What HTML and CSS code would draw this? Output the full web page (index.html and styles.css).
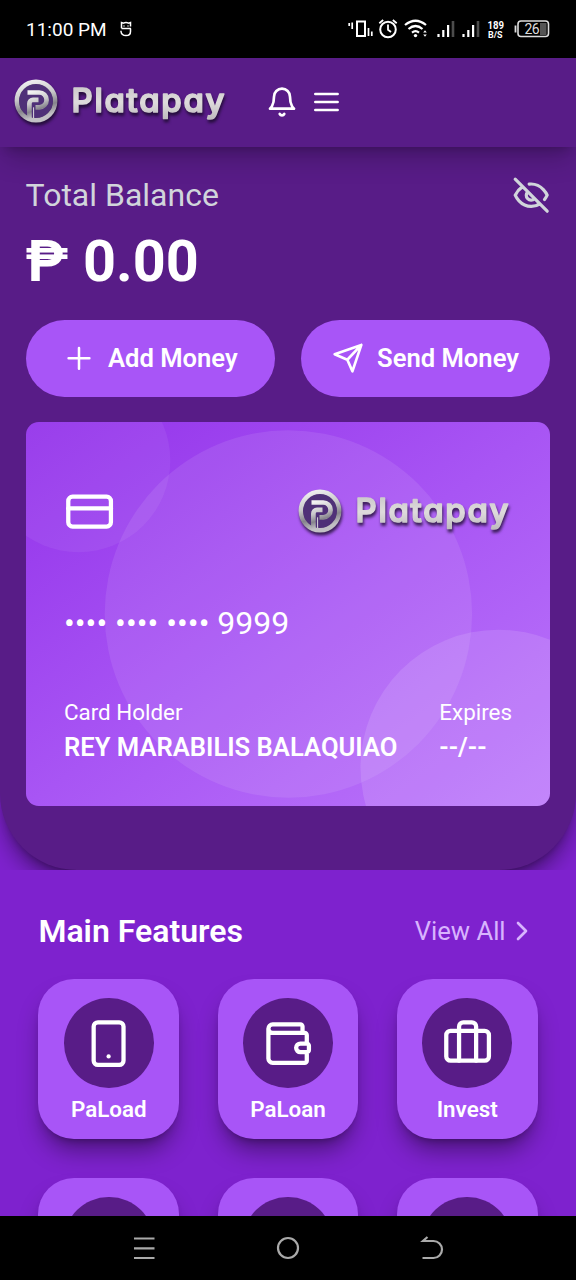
FILE: index.html
```html
<!DOCTYPE html>
<html lang="en">
<head>
<meta charset="utf-8">
<title>Platapay</title>
<link rel="stylesheet" href="styles.css">
</head>
<body>
<svg class="defs" width="0" height="0" aria-hidden="true">
  <defs>
    <linearGradient id="silver" x1="0" y1="0" x2="0.25" y2="1">
      <stop offset="0" stop-color="#f4f4f4"/><stop offset=".45" stop-color="#c9c9cb"/><stop offset=".75" stop-color="#86848c"/><stop offset="1" stop-color="#c2c0c5"/>
    </linearGradient>
    <linearGradient id="lettering" x1="0" y1="0" x2="0" y2="1">
      <stop offset="0" stop-color="#c4c2c4"/><stop offset=".55" stop-color="#dedbdc"/><stop offset="1" stop-color="#bdb9bd"/>
    </linearGradient>
    <symbol id="logo" viewBox="0 0 214 52">
      <circle cx="23" cy="25" r="17" fill="#4f3078"/>
      <circle cx="23" cy="25" r="19.2" fill="none" stroke="url(#silver)" stroke-width="4.4"/>
      <path d="M14.500 16.500H26.200a7.400 7.400 0 0 1 0 14.800H22.500M16.400 42V27.500a3.600 3.600 0 0 1 3.600-3.600H25.500" fill="none" stroke="url(#silver)" stroke-width="4.700"/>
      <path d="M20.600 42V31.300" fill="none" stroke="#dcdadd" stroke-width="1"/>
      <text class="logo-text" x="58.500" y="36" textLength="153" lengthAdjust="spacing">Platapay</text>
    </symbol>
  </defs>
</svg>
<div class="screen">
  <div class="status">
    <span class="clock">11:00 PM</span>
    <svg class="app-mark" width="12" height="16" viewBox="0 0 12 16"><path d="M1.500 7.200V1.500L3.500 2.200Q6 .8 8.500 2.200L10.500 1.500V5.500M4 4.400V5.400M8 4.400V5.400M1.500 7.600H11M1 9.800V10.500Q1.500 14.600 6 14.600Q10.500 14.600 10.500 10.500V7.600" fill="none" stroke="#fff" stroke-width="1.500"/></svg>
    <svg class="system" width="206" height="28" viewBox="0 0 206 28" fill="none" stroke="#fff">
      <path d="M2.200 7V10M5.200 6.500V13M21.500 12V20M24.800 15.500V20" stroke-width="1.700"/>
      <rect x="10" y="5.500" width="8" height="14.500" stroke-width="2"/>
      <circle cx="41" cy="13.500" r="7.800" stroke-width="2"/>
      <path d="M41 8.500V13.700L44 16M32.300 7.200L36.200 4M45.800 4L49.700 7.200" stroke-width="1.800"/>
      <path d="M58 9Q68.500 .5 79 9M61.500 13Q68.500 7 75.500 13M65 16.600Q68.500 13.800 72 16.600" stroke-width="2.200"/>
      <circle cx="68.500" cy="19.600" r="1.700" fill="#fff" stroke="none"/>
      <path d="M76.200 16.500L78 14.300L79.800 16.500ZM76.200 18.500L78 20.700L79.800 18.500Z" fill="#fff" stroke="none"/>
      <path d="M91.500 18V21M96.300 14V21M101.100 9V21M116.500 18V21M121.300 14V21M126.100 9V21" stroke-width="2.200"/>
      <path d="M106 5V21M131 5V21" stroke="#4c4c4c" stroke-width="2.600"/>
      <text class="rate" x="140.500" y="12.600" textLength="16.500" lengthAdjust="spacingAndGlyphs">189</text>
      <text class="rate small" x="141" y="22" textLength="14.500" lengthAdjust="spacingAndGlyphs">B/S</text>
      <rect x="193" y="7" width="6.500" height="12" fill="#555" stroke="none"/>
      <rect x="171" y="5" width="30.500" height="15.500" rx="3" stroke-width="1.600" stroke="#ddd"/>
      <path d="M168.500 9.500V16.500" stroke="#ddd" stroke-width="1.800"/>
      <text class="charge" x="177.500" y="17.800" textLength="15">26</text>
    </svg>
  </div>

  <header class="topbar">
    <svg class="logo" role="img" aria-label="Platapay"><use href="#logo"/></svg>
    <svg class="icon" viewBox="0 0 24 24" stroke-width="2"><path d="M6 8a6 6 0 0 1 12 0c0 7 3 9 3 9H3s3-2 3-9M10.300 21a1.940 1.940 0 0 0 3.400 0"/></svg>
    <svg class="icon" viewBox="0 0 24 24" stroke-width="2"><path d="M4 6H20.700M4 12H20.700M4 18H20.700"/></svg>
  </header>

  <main class="content">
    <div class="hero-wrap">
      <section class="hero">
        <div class="balance-head">
          <span>Total Balance</span>
          <svg class="icon eye" viewBox="0 0 24 24" stroke-width="2"><path d="M9.880 9.880a3 3 0 1 0 4.240 4.240M10.730 5.080A10.430 10.430 0 0 1 12 5c7 0 10 7 10 7a13.160 13.160 0 0 1-1.670 2.680M6.610 6.610A13.526 13.526 0 0 0 2 12s3 7 10 7a9.740 9.740 0 0 0 5.390-1.610M2 2L22 22"/></svg>
        </div>
        <div class="amount">₱ 0.00</div>
        <div class="actions">
          <button class="action"><svg class="icon" viewBox="0 0 24 24" stroke-width="1.900"><path d="M12 4.500V20M4.200 12.200H19.800"/></svg>Add Money</button>
          <button class="action"><svg class="icon" viewBox="0 0 24 24" stroke-width="2"><path d="M22 2.200L15.300 22L11.500 13.300L2 9.200ZM22 2.200L11.500 13.300"/></svg>Send Money</button>
        </div>
        <section class="card">
          <svg class="card-art" viewBox="0 0 524.8 384" fill="#fff"><circle cx="52.500" cy="38.500" r="91.800" opacity=".06"/><circle cx="262.400" cy="192" r="183.700" opacity=".09"/><circle cx="472.300" cy="345.500" r="137.800" opacity=".12"/></svg>
          <div class="card-top">
            <svg class="icon large" viewBox="0 0 24 24" stroke-width="2"><rect x="2" y="5" width="20" height="14" rx="2"/><path d="M2 10.500H22"/></svg>
            <svg class="logo" role="img" aria-label="Platapay"><use href="#logo"/></svg>
          </div>
          <div class="card-number">•••• •••• •••• 9999</div>
          <div class="card-info">
            <div><div class="label">Card Holder</div><div class="value">REY MARABILIS BALAQUIAO</div></div>
            <div><div class="label">Expires</div><div class="value">--/--</div></div>
          </div>
        </section>
      </section>
    </div>

    <section class="features">
      <div class="features-head">
        <h2>Main Features</h2>
        <a class="view-all">View All<svg class="icon" viewBox="0 0 24 24" stroke-width="2"><path d="M9 18l6-6-6-6"/></svg></a>
      </div>
      <div class="grid">
        <div class="tile"><div class="disc"><svg class="icon large" viewBox="0 0 24 24" stroke-width="2"><rect x="5" y="2" width="14" height="20" rx="2"/><path d="M12 18h.01"/></svg></div>PaLoad</div>
        <div class="tile"><div class="disc"><svg class="icon large" viewBox="0 0 24 24" stroke-width="2"><path d="M19 7V4a1 1 0 0 0-1-1H5a2 2 0 0 0 0 4h15a1 1 0 0 1 1 1v4M3 5v14a2 2 0 0 0 2 2h15a1 1 0 0 0 1-1v-4M18 12a2 2 0 0 0 0 4h3a1 1 0 0 0 1-1v-2a1 1 0 0 0-1-1Z"/></svg></div>PaLoan</div>
        <div class="tile"><div class="disc"><svg class="icon large" viewBox="0 0 24 24" stroke-width="2"><path d="M16 20V4a2 2 0 0 0-2-2h-4a2 2 0 0 0-2 2v16"/><rect x="2" y="6" width="20" height="14" rx="2"/></svg></div>Invest</div>
        <div class="tile"><div class="disc"></div></div>
        <div class="tile"><div class="disc"></div></div>
        <div class="tile"><div class="disc"></div></div>
      </div>
    </section>
  </main>

  <nav class="sysnav">
    <svg width="24" height="24" viewBox="0 0 24 24"><path d="M2 2.500H22.500M2 12.300H22.500M2 22H22.500"/></svg>
    <svg width="24" height="24" viewBox="0 0 24 24"><circle cx="12" cy="12" r="10"/></svg>
    <svg width="24" height="24" viewBox="0 0 24 24"><path d="M7.500 1L3 5H13.500a8.500 8.500 0 0 1 0 17H2.500"/></svg>
  </nav>
</div>
</body>
</html>
```
FILE: styles.css
```css
* { box-sizing: border-box; }
body { margin: 0; background: #000; font-family: Roboto, "Liberation Sans", sans-serif; color: #fff; }
.defs { position: absolute; }
.screen { width: 576px; height: 1280px; display: flex; flex-direction: column; overflow: hidden; }

.status { height: 57.6px; flex: none; display: flex; align-items: center; padding: 2px 23px 0 26px; background: #000; }
.clock { font-size: 19px; }
.app-mark { margin: -2px 0 0 13px; }
.system { margin-left: auto; }
.rate { font: 700 10.5px Roboto, sans-serif; fill: #fff; stroke: none; }
.rate.small { font-size: 9px; }
.charge { font: 400 14px Roboto, sans-serif; fill: #ddd; stroke: none; }

.icon { width: 32px; height: 32px; flex: none; fill: none; stroke: currentColor; stroke-linecap: round; stroke-linejoin: round; }
.icon.large { width: 51.2px; height: 51.2px; display: block; }
.logo { width: 214px; height: 52px; display: block; filter: drop-shadow(1px 3px 1.5px rgba(20, 8, 35, .75)); }
.logo-text { font: 500 33px Inter, Lato, sans-serif; font-feature-settings: "cv11"; fill: url(#lettering); stroke: url(#lettering); stroke-width: 1.7px; stroke-linejoin: round; }

.topbar { height: 89.6px; flex: none; display: flex; align-items: center; padding-left: 13px; background: #581c87; position: relative; z-index: 2; box-shadow: 0 16px 24px -5px rgba(0, 0, 0, .22), 0 6px 10px -6px rgba(0, 0, 0, .25); }
.topbar .icon { margin-left: 12.8px; }
.topbar .logo + .icon { margin-left: 38.6px; }

.content { flex: 1; min-height: 0; overflow: hidden; background: #7e22ce; }
.hero-wrap { overflow: hidden; }
.hero { height: 723.2px; padding: 25.6px 25.6px 64px; background: #581c87; border-radius: 0 0 76.8px 76.8px; box-shadow: 0 16px 24px -5px rgba(0, 0, 0, .45), 0 6px 10px -6px rgba(0, 0, 0, .4); }
.balance-head { display: flex; align-items: center; justify-content: space-between; height: 44.8px; font-size: 32px; color: #d1d5db; }
.eye { width: 38.4px; height: 38.4px; }
.amount { margin: 12.8px 0 25.6px; height: 64px; line-height: 64px; font-size: 57.6px; font-weight: 700; white-space: pre; }
.actions { display: grid; grid-template-columns: 1fr 1fr; gap: 25.6px; }
.action { height: 76.8px; display: flex; align-items: center; justify-content: center; gap: 12.8px; padding: 0; border: 0; border-radius: 39px; background: #a855f7; color: #fff; font: 600 25.6px Roboto, sans-serif; }

.card { position: relative; overflow: hidden; height: 384px; margin-top: 25.6px; padding: 38.4px; border-radius: 12.8px; background: linear-gradient(to bottom right, #9333ea, #a855f4 50%, #bb76fb); }
.card-art { position: absolute; inset: 0; width: 100%; height: 100%; }
.card-top, .card-number, .card-info { position: relative; }
.card-top { height: 102.4px; display: flex; align-items: center; justify-content: space-between; }
.card-top .logo { margin-right: 1px; }
.card-number { margin: 37.4px 0 50.8px; font-size: 32px; line-height: 44.8px; }
.card-info { display: flex; justify-content: space-between; }
.label { font-size: 22.4px; line-height: 32px; }
.value { font-size: 25.6px; line-height: 38.4px; font-weight: 600; white-space: nowrap; }

.features { padding: 38.4px; }
.features-head { display: flex; align-items: center; justify-content: space-between; height: 44.8px; margin-bottom: 25.6px; }
.features-head h2 { margin: 0; font-size: 32px; font-weight: 600; }
.view-all { display: flex; align-items: center; font-size: 25.6px; color: #d8b4fe; }
.grid { display: grid; grid-template-columns: repeat(3, 1fr); gap: 38.4px; }
.tile { height: 160px; padding-top: 19.2px; display: flex; flex-direction: column; align-items: center; gap: 5.4px; border-radius: 36px; background: #a855f7; font-size: 22.4px; line-height: 32px; font-weight: 600; box-shadow: 0 16px 24px -5px rgba(0, 0, 0, .4), 0 6px 10px -6px rgba(0, 0, 0, .4); }
.disc { width: 89.6px; height: 89.6px; flex: none; display: grid; place-items: center; border-radius: 50%; background: #581c87; }

.sysnav { height: 64px; flex: none; display: flex; justify-content: space-between; align-items: center; padding: 0 132px; background: #000; }
.sysnav svg { fill: none; stroke: #aaa; stroke-width: 2.2; }
```
